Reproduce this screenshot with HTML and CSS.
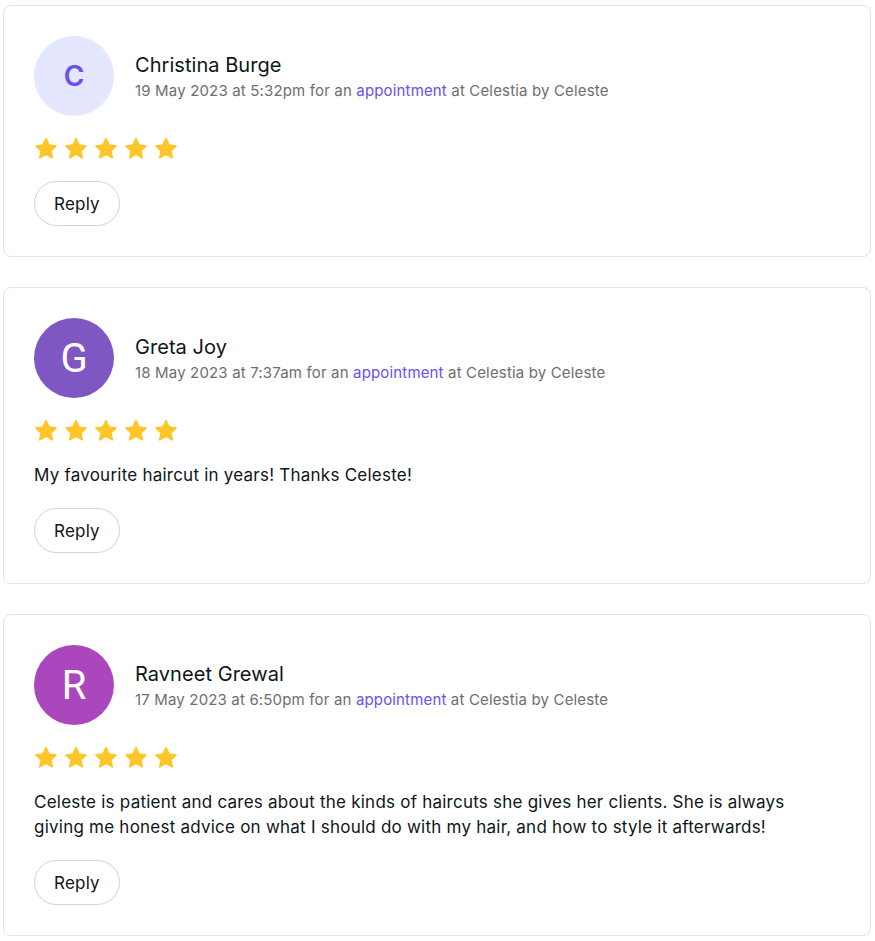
FILE: index.html
```html
<!DOCTYPE html>
<html lang="en">
<head>
<meta charset="utf-8">
<title>Reviews</title>
<link rel="stylesheet" href="styles.css">
</head>
<body>
<svg width="0" height="0" class="defs">
  <defs>
    <symbol id="star" viewBox="0 0 24 24">
      <path d="M12 1.6l3.05 6.5 7.05.85-5.2 4.85 1.35 7.0L12 17.3l-6.25 3.5 1.35-7.0-5.2-4.85 7.05-.85z" fill="#ffc629" stroke="#ffc629" stroke-width="1.6" stroke-linejoin="round"/>
    </symbol>
  </defs>
</svg>
<main class="list">
  <article class="card">
    <header class="head">
      <div class="avatar avatar-c">C</div>
      <div class="who">
        <div class="name">Christina Burge</div>
        <div class="meta">19 May 2023 at 5:32pm for an <a class="link" href="#">appointment</a> at Celestia by Celeste</div>
      </div>
    </header>
    <div class="stars">
      <svg class="star"><use href="#star"/></svg><svg class="star"><use href="#star"/></svg><svg class="star"><use href="#star"/></svg><svg class="star"><use href="#star"/></svg><svg class="star"><use href="#star"/></svg>
    </div>
    <div><button class="reply">Reply</button></div>
  </article>

  <article class="card">
    <header class="head">
      <div class="avatar avatar-g">G</div>
      <div class="who">
        <div class="name">Greta Joy</div>
        <div class="meta">18 May 2023 at 7:37am for an <a class="link" href="#">appointment</a> at Celestia by Celeste</div>
      </div>
    </header>
    <div class="stars">
      <svg class="star"><use href="#star"/></svg><svg class="star"><use href="#star"/></svg><svg class="star"><use href="#star"/></svg><svg class="star"><use href="#star"/></svg><svg class="star"><use href="#star"/></svg>
    </div>
    <p class="text">My favourite haircut in years! Thanks Celeste!</p>
    <div><button class="reply">Reply</button></div>
  </article>

  <article class="card">
    <header class="head">
      <div class="avatar avatar-r">R</div>
      <div class="who">
        <div class="name">Ravneet Grewal</div>
        <div class="meta">17 May 2023 at 6:50pm for an <a class="link" href="#">appointment</a> at Celestia by Celeste</div>
      </div>
    </header>
    <div class="stars">
      <svg class="star"><use href="#star"/></svg><svg class="star"><use href="#star"/></svg><svg class="star"><use href="#star"/></svg><svg class="star"><use href="#star"/></svg><svg class="star"><use href="#star"/></svg>
    </div>
    <p class="text">Celeste is patient and cares about the kinds of haircuts she gives her clients. She is always giving me honest advice on what I should do with my hair, and how to style it afterwards!</p>
    <div><button class="reply">Reply</button></div>
  </article>
</main>
</body>
</html>
```
FILE: styles.css
```css
* { box-sizing: border-box; }
html, body { margin: 0; background: #fff; }
body {
  padding: 5px 4px 0 3px;
  font-family: Inter, "Noto Sans", sans-serif;
  color: #0d1619;
}
.defs { position: absolute; width: 0; height: 0; }
.list { display: flex; flex-direction: column; gap: 30px; }
.card {
  border: 1px solid #e2e2e2;
  border-radius: 8px;
  padding: 30px;
  display: flex;
  flex-direction: column;
  gap: 20px;
}
.head { display: flex; align-items: center; gap: 21px; margin-bottom: 1px; }
.avatar {
  width: 80px; height: 80px; border-radius: 50%;
  display: flex; align-items: center; justify-content: center;
  flex: none;
}
.avatar-c { background: #e5e6ff; color: #6950f3; font-family: Inter, sans-serif; font-weight: 600; font-size: 28px; }
.avatar-g { background: #7e57c2; color: #fff; font-family: Roboto, sans-serif; font-size: 40px; }
.avatar-r { background: #ab47bc; color: #fff; font-family: Roboto, sans-serif; font-size: 40px; }
.who { display: flex; flex-direction: column; gap: 4px; padding-top: 2px; }
.name { font-size: 20px; line-height: 24px; color: #0d1619; letter-spacing: 0.05px; }
.meta { font-size: 15px; line-height: 20px; color: #6e6e6e; letter-spacing: 0.16px; }
.link { color: #6950f3; text-decoration: none; }
.stars { display: flex; gap: 6px; height: 24px; }
.star { width: 24px; height: 24px; }
.text { margin: 0; font-size: 17px; line-height: 25px; color: #0d1619; letter-spacing: 0.23px; max-width: 790px; }
.reply {
  height: 45px; width: 86px;
  border: 1px solid #d3d3d3; border-radius: 23px;
  background: #fff;
  font-family: Inter, sans-serif; font-size: 17px; color: #0d1619; letter-spacing: 0.2px;
  padding: 0;
}
```
